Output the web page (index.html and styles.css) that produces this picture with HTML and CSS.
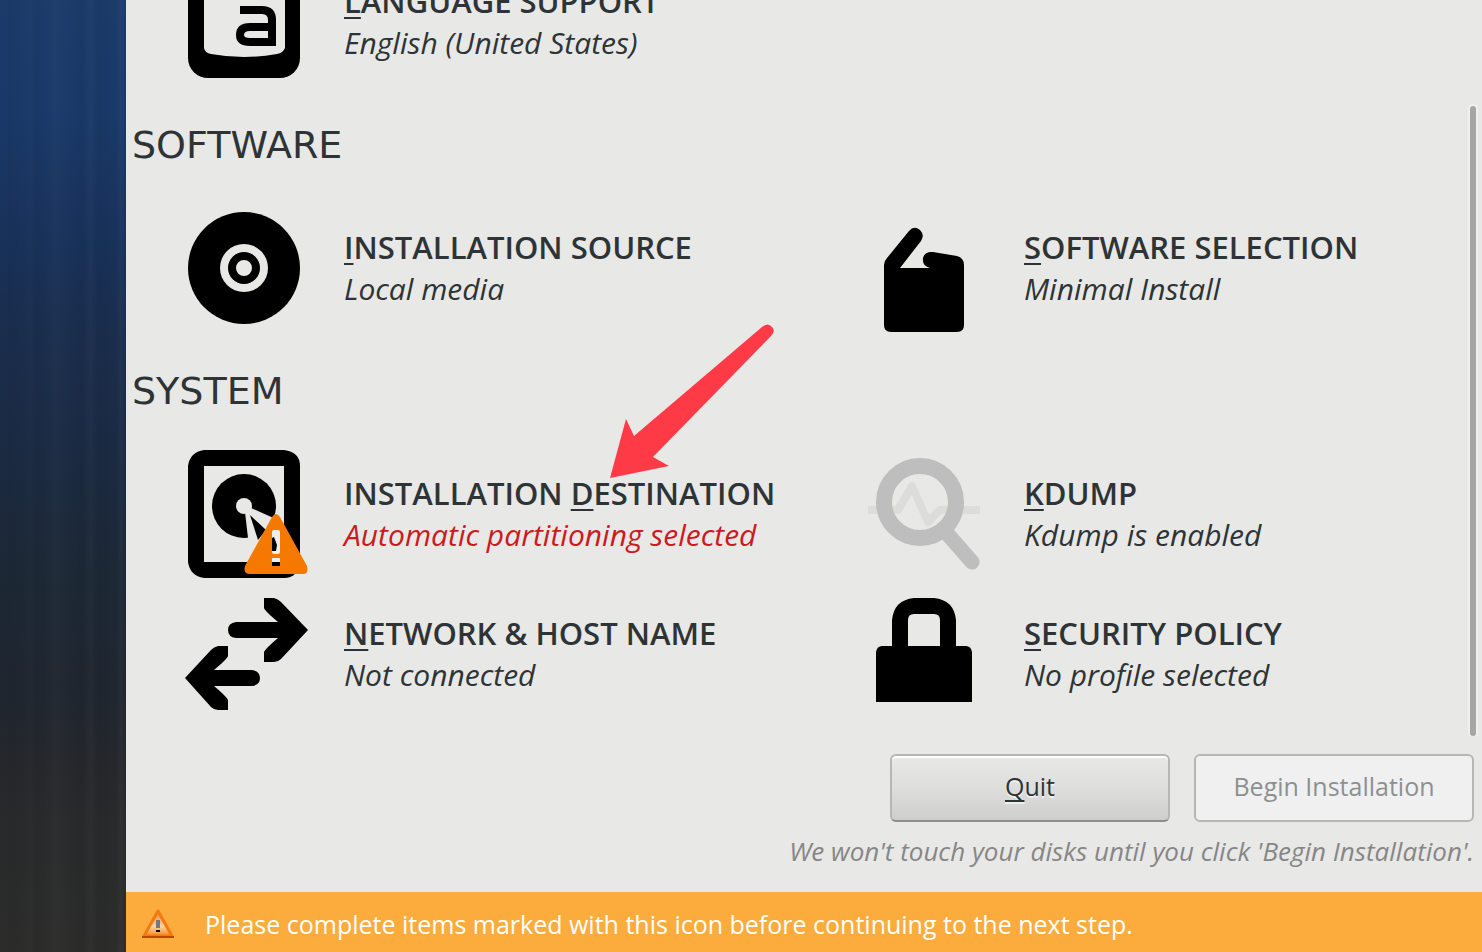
FILE: index.html
```
<!DOCTYPE html>
<html lang="en">
<head>
<meta charset="utf-8">
<title>Installation Summary</title>
<link rel="stylesheet" href="styles.css">
</head>
<body>

<div class="wallpaper"></div>

<main class="hub">
	<div class="scroller">
		<div class="spokes">
			<button class="spoke" type="button">
				<svg class="icon" viewBox="0 0 128 128">
					<rect x="8" y="8" width="112" height="112" rx="20"/>
					<path fill="#e8e8e6" d="M24 24H105V90Q103 95 97 96Q64 102 31 96Q25 95 24 90Z"/>
					<path fill="none" stroke="#000" stroke-width="8" d="M60 52H82Q92 52 92 62V84H70Q60 84 60 77Q60 69 70 69H92"/>
				</svg>
				<span class="label"><span class="name"><u>L</u>ANGUAGE SUPPORT</span><span class="status">English (United States)</span></span>
			</button>
		</div>

		<h2>SOFTWARE</h2>
		<div class="spokes">
			<button class="spoke" type="button">
				<svg class="icon" viewBox="0 0 128 128">
					<circle cx="64" cy="64" r="56"/>
					<circle cx="64" cy="64" r="24" fill="#e8e8e6"/>
					<circle cx="64" cy="64" r="12" fill="none" stroke="#000" stroke-width="8"/>
				</svg>
				<span class="label"><span class="name"><u>I</u>NSTALLATION SOURCE</span><span class="status">Local media</span></span>
			</button>
			<button class="spoke" type="button">
				<svg class="icon" viewBox="0 0 128 128">
					<path d="M24 61Q24 57 27 54L49 27Q54 21 60 26Q65 31 61 37L40 64H70Q62 62 63 54Q65 47 73 48L97 52Q104 54 104 61V121Q104 128 97 128H31Q24 128 24 121Z"/>
				</svg>
				<span class="label"><span class="name"><u>S</u>OFTWARE SELECTION</span><span class="status">Minimal Install</span></span>
			</button>
		</div>

		<h2>SYSTEM</h2>
		<div class="spokes">
			<button class="spoke" type="button">
				<svg class="icon" viewBox="0 0 128 128">
					<path fill-rule="evenodd" d="M24 0H104Q120 2 120 16V112Q118 128 104 128H24Q10 126 8 112V16Q10 2 24 0ZM24 16V112H104V16Z"/>
					<circle cx="64" cy="56" r="32"/>
					<circle cx="64" cy="56" r="8" fill="#e8e8e6"/>
					<path fill="#e8e8e6" d="M65 62L71 58L98 70V104H67L68 88Z"/>
					<path d="M70 65L86 80L78 90Z"/>
					<path fill="#f57900" d="M92 67Q96 61 100 67L127 116Q129 124 123 124H69Q63 123 65 116Z"/>
					<rect x="92" y="80" width="8" height="24" rx="2" fill="#eeeeec"/>
					<path d="M92 88L94 87L97 95L96 101L92 101Z"/>
					<path fill="#eeeeec" d="M92 108H100V112H92Z"/>
					<path d="M92 112H100V116H92Z"/>
				</svg>
				<span class="label"><span class="name">INSTALLATION <u>D</u>ESTINATION</span><span class="status warn">Automatic partitioning selected</span></span>
				<svg class="pointer" viewBox="0 0 164 154">
					<path fill="#fe3a47" d="M0 154L16 95L24 112L152 3Q158 -2 162 3Q166 7 161 12L43 133L59 142Z"/>
				</svg>
			</button>
			<button class="spoke" type="button">
				<svg class="icon" viewBox="0 0 128 128">
					<path fill="none" stroke="#dcdcda" stroke-width="8" stroke-linejoin="round" d="M8 60H38L52 36L68 72L80 60H120"/>
					<circle cx="60" cy="52" r="36" fill="none" stroke="#bebebe" stroke-width="16"/>
					<path stroke="#bebebe" stroke-width="15" stroke-linecap="round" d="M84 80L112 112"/>
				</svg>
				<span class="label"><span class="name"><u>K</u>DUMP</span><span class="status">Kdump is enabled</span></span>
			</button>
			<button class="spoke" type="button">
				<svg class="icon" viewBox="0 0 128 128">
					<path d="M84 8H94Q98 9 101 12L128 40L101 69Q98 72 94 72H84V62Q85 59 98 48H56Q48 47 48 40Q48 33 56 32H98Q85 21 84 18Z"/>
					<path d="M48 56H38Q34 57 31 60L5 88L31 117Q34 120 38 120H48V110Q47 107 34 96H72Q80 95 80 88Q80 81 72 80H34Q47 69 48 66Z"/>
				</svg>
				<span class="label"><span class="name"><u>N</u>ETWORK &amp; HOST NAME</span><span class="status">Not connected</span></span>
			</button>
			<button class="spoke" type="button">
				<svg class="icon" viewBox="0 0 128 128">
					<path fill-rule="evenodd" d="M16 112V62Q17 56 22 56H32V30Q34 10 54 8H74Q94 10 96 30V56H106Q111 56 112 62V112ZM48 56H80V30Q80 24 74 24H54Q48 24 48 30Z"/>
				</svg>
				<span class="label"><span class="name"><u>S</u>ECURITY POLICY</span><span class="status">No profile selected</span></span>
			</button>
		</div>
		<div class="scrollbar"></div>
	</div>

	<div class="actions">
		<button class="btn" type="button"><u>Q</u>uit</button>
		<button class="btn" type="button" disabled>Begin Installation</button>
	</div>
	<p class="hint">We won't touch your disks until you click 'Begin Installation'.</p>

	<footer class="infobar">
		<svg class="infobar-icon" viewBox="0 0 32 32">
			<defs>
				<linearGradient id="glow" x1="0" y1="0" x2="0" y2="1">
					<stop offset="0" stop-color="#f08030"/>
					<stop offset="0.6" stop-color="#fbd3a0"/>
					<stop offset="1" stop-color="#f98a20"/>
				</linearGradient>
			</defs>
			<path fill="url(#glow)" stroke="#f37a10" stroke-width="3" stroke-linejoin="round" d="M16 3L30 28H2Z"/>
			<path stroke="#b84a00" stroke-width="2" d="M0 29H32"/>
			<path fill="#777" d="M14 12H18V20H14Z"/>
			<path d="M14 22H18V24H14Z"/>
		</svg>
		<span>Please complete items marked with this icon before continuing to the next step.</span>
	</footer>
</main>

</body>
</html>
```
FILE: styles.css
```
* {
	box-sizing:border-box;
}
body {
	display:flex;
	height:100vh;
	margin:0;
	overflow:hidden;
	background-color:#e8e8e6;
	color:#2e3436;
	font-family:"Open Sans", "Noto Sans", sans-serif;
}
button {
	font:inherit;
	color:inherit;
}
u {
	text-decoration-thickness:2px;
	text-underline-offset:4px;
	text-decoration-skip-ink:none;
}
.wallpaper {
	flex:0 0 126px;
	background:
		linear-gradient(90deg, transparent 5%, rgba(0, 0, 0, 0.03) 7%, transparent 18%, rgba(255, 255, 255, 0.01) 24%, rgba(0, 0, 0, 0.03) 29%, transparent 34%, rgba(255, 255, 255, 0.02) 44%, transparent 58%, rgba(0, 0, 0, 0.03) 65%, rgba(255, 255, 255, 0.02) 72%, rgba(0, 0, 0, 0.03) 78%, transparent 92%, rgba(255, 255, 255, 0.03) 96%, transparent),
		linear-gradient(#1b3b69, #1a3968 12%, #18325b 24%, #1a2d4c 36%, #1b2a42 48%, #1c2835 60%, #1f2630 72%, #25272c 80%, #282a2b 87%, #2c2c2b);
}
.hub {
	flex:1;
	min-width:0;
	display:flex;
	flex-direction:column;
}
.scroller {
	position:relative;
	flex:1;
	min-height:0;
	display:flex;
	flex-direction:column;
	justify-content:flex-end;
	padding-bottom:18px;
	overflow:hidden;
}
.scrollbar {
	position:absolute;
	top:106px;
	right:6px;
	bottom:0;
	width:6px;
	border-radius:3px;
	background-color:#a5a6a5;
	box-shadow:0 0 0 2px #f0f0ef;
}
h2 {
	margin:31px 0 31px 6px;
	font:38px/56px "DejaVu Sans", sans-serif;
}
.spokes {
	display:grid;
	grid-template-columns:1fr 1fr;
	gap:12px 4px;
}
.spoke {
	position:relative;
	display:flex;
	align-items:center;
	gap:36px;
	padding:0 0 0 54px;
	border:none;
	background:none;
	text-align:left;
	white-space:nowrap;
}
.icon {
	flex:none;
	width:128px;
	height:128px;
}
.label {
	display:flex;
	flex-direction:column;
	line-height:42px;
}
.name {
	font-size:31px;
	font-weight:600;
}
.status {
	font-size:30px;
	font-style:italic;
}
.warn {
	color:#cc1a1e;
}
.pointer {
	position:absolute;
	left:484px;
	bottom:100px;
	width:164px;
	height:154px;
}
.actions {
	display:flex;
	justify-content:flex-end;
	gap:24px;
	padding:18px 8px 0;
}
.btn {
	width:280px;
	height:68px;
	padding:0 0 4px;
	border:2px solid #b6b6b3;
	border-bottom-color:#8f8f8a;
	border-radius:6px;
	background:linear-gradient(#e8e8e7, #dededd 50%, #cececc);
	box-shadow:inset 0 2px #fff;
	font-size:25px;
	text-shadow:0 2px rgba(255, 255, 255, 0.6);
}
.btn:disabled {
	border-color:#b6b6b3;
	background:#f0f0f0;
	box-shadow:none;
	color:#8d9091;
	text-shadow:none;
}
.hint {
	margin:8px 8px 20px;
	color:#868686;
	font-size:26px;
	font-style:italic;
	line-height:42px;
	text-align:right;
}
.infobar {
	display:flex;
	align-items:center;
	gap:31px;
	height:60px;
	padding:4px 16px 0;
	background-color:#fbac3d;
	color:#fff;
	font-size:25px;
}
.infobar-icon {
	flex:none;
	width:32px;
	height:32px;
}
```
